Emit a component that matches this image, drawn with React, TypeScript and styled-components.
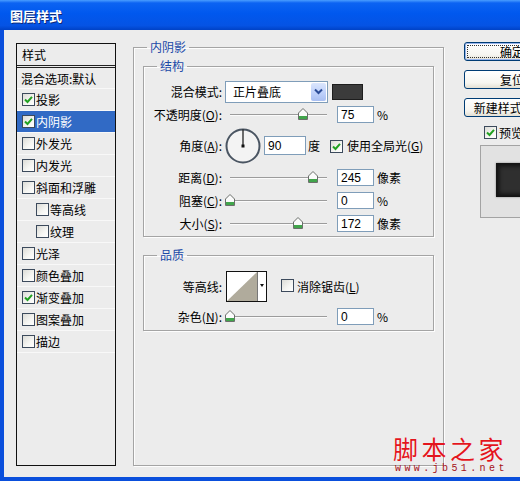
import React from 'react'
import styled, { createGlobalStyle } from 'styled-components'

const GlobalStyle = createGlobalStyle`
  html, body { margin: 0; padding: 0; overflow: hidden; }
  body {
    font-family: "Noto Sans CJK SC", "Liberation Sans", sans-serif;
    font-size: 12px;
    color: #000;
  }
`

const Window = styled.div`
  position: relative;
  width: 520px;
  height: 481px;
  display: flex;
  flex-direction: column;
  background: #0a4fdc;
  overflow: hidden;
`

const TitleBar = styled.div`
  flex: none;
  height: 30px;
  display: flex;
  align-items: center;
  padding-left: 10px;
  background: linear-gradient(180deg, #4a9dff 0%, #0c63f2 10%, #0058ee 45%, #0553e4 85%, #0042c6 100%);
  color: #fff;
  font-weight: bold;
  font-size: 13px;
  text-shadow: 1px 1px 0 #0b2a7a;
`

const Client = styled.div`
  flex: 1;
  min-height: 0;
  margin: 0 0 4px 4px;
  padding: 10px 0 11px 12px;
  box-sizing: border-box;
  background: #ececec;
  display: flex;
  align-items: stretch;
  overflow: hidden;
`

/* ---------- left style list ---------- */

const StyleList = styled.div`
  flex: none;
  width: 100px;
  margin-top: 3px;
  box-sizing: border-box;
  border: 1px solid #111;
  display: flex;
  flex-direction: column;
`

const ListHeader = styled.div`
  height: 21px;
  padding-left: 5px;
  display: flex;
  align-items: center;
  border-bottom: 3px double #222;
`

const ListItem = styled.div<{ $indent?: boolean; $selected?: boolean; $plain?: boolean }>`
  height: ${p => (p.$plain ? 21 : 22)}px;
  box-sizing: border-box;
  display: flex;
  align-items: center;
  gap: 1px;
  padding-left: ${p => (p.$indent ? 19 : p.$plain ? 4 : 5)}px;
  border-bottom: 1px solid #f8f8f8;
  background: ${p => (p.$selected ? '#316ac5' : 'transparent')};
  color: ${p => (p.$selected ? '#fff' : '#000')};
  white-space: nowrap;
`

const Box = styled.span`
  flex: none;
  width: 13px;
  height: 13px;
  box-sizing: border-box;
  border: 1px solid #3c4a5c;
  background: linear-gradient(135deg, #dcdcd7 0%, #f6f6f3 60%, #fff 100%);
  display: inline-flex;
  align-items: center;
  justify-content: center;
`

const Check = ({ on }: { on?: boolean }) => (
  <Box>
    {on && (
      <svg width="9" height="9" viewBox="0 0 9 9">
        <path d="M1 4.5 L3.5 7 L8 1.8" fill="none" stroke="#21a121" strokeWidth="2" />
      </svg>
    )}
  </Box>
)

/* ---------- group boxes ---------- */

const GroupBox = styled.fieldset<{ $outer?: boolean; $top?: number }>`
  margin: ${p => p.$top ?? 0}px 0 0;
  min-width: 0;
  box-sizing: border-box;
  border: 1px solid #a4a4a4;
  box-shadow: 1px 1px 0 #fdfdfd, inset 1px 1px 0 #fdfdfd;
  padding: ${p => (p.$outer ? '5px 9px 0' : '0')};
`

const Legend = styled.legend<{ $shift: number }>`
  margin-left: ${p => p.$shift}px;
  padding: 0 3px;
  line-height: 14px;
  color: #1b4aa8;
`

const MainGroup = styled(GroupBox)`
  flex: none;
  width: 311px;
  margin-left: 17px;
`

const Section = styled.div<{ $pad: string }>`
  padding: ${p => p.$pad};
`

const Row = styled.div<{ $h?: number; $top?: number }>`
  display: flex;
  align-items: center;
  height: ${p => p.$h ?? 23}px;
  margin-top: ${p => p.$top ?? 0}px;
  white-space: nowrap;
`

const Label = styled.span`
  flex: none;
  width: 80px;
  box-sizing: border-box;
  padding-right: 2px;
  text-align: right;
`

const Select = styled.div`
  flex: none;
  width: 103px;
  height: 22px;
  margin-left: 1px;
  box-sizing: border-box;
  border: 1px solid #7f9db9;
  background: #fff;
  display: flex;
  align-items: center;
  justify-content: space-between;
  padding: 0 1px 0 7px;
`

const SelectButton = styled.span`
  width: 15px;
  height: 18px;
  border-radius: 2px;
  background: linear-gradient(180deg, #dbe6fd 0%, #bccffa 60%, #a9bff2 100%);
  display: flex;
  align-items: center;
  justify-content: center;
`

const Swatch = styled.span`
  flex: none;
  width: 31px;
  height: 16px;
  margin-left: 4px;
  box-sizing: border-box;
  border: 1px solid #1d1d1d;
  background: #3b3b3b;
`

const Slider = styled.div`
  position: relative;
  flex: none;
  width: 107px;
  height: 23px;
  margin-left: 2px;
  &::before {
    content: '';
    position: absolute;
    left: 4px;
    right: 6px;
    top: 11px;
    border-top: 1px solid #9c9c9c;
    border-bottom: 1px solid #fbfbfb;
  }
`

const Thumb = styled.svg`
  position: absolute;
  top: 5px;
`

const NumBox = styled.span<{ $w?: number; $h?: number; $left?: number }>`
  flex: none;
  width: ${p => p.$w ?? 37}px;
  height: ${p => p.$h ?? 17}px;
  margin-left: ${p => p.$left ?? 4}px;
  box-sizing: border-box;
  border: 1px solid #7f9db9;
  background: #fff;
  padding-left: 3px;
  font-family: "Liberation Sans", sans-serif;
  font-size: 12px;
  display: flex;
  align-items: center;
`

const Unit = styled.span<{ $left?: number }>`
  margin-left: ${p => p.$left ?? 3}px;
`

const Dial = styled.svg`
  flex: none;
  margin-left: 1px;
`

const Contour = styled.svg`
  flex: none;
  margin-left: 2px;
`

/* ---------- right column ---------- */

const SideColumn = styled.div`
  flex: none;
  width: 100px;
  margin: 2px 0 0 20px;
  display: flex;
  flex-direction: column;
  align-items: flex-start;
`

const Button = styled.div<{ $default?: boolean }>`
  position: relative;
  width: 96px;
  height: 19px;
  margin-bottom: 9px;
  box-sizing: border-box;
  border: 1px solid #003c74;
  border-radius: 3px;
  background: linear-gradient(180deg, #ffffff 0%, #f6f5f0 70%, #e3dfd3 100%);
  box-shadow: ${p => (p.$default ? 'inset 0 0 0 1px #98b4ec' : 'none')};
  display: flex;
  align-items: center;
  justify-content: center;
  white-space: nowrap;
  &::after {
    content: '';
    display: ${p => (p.$default ? 'block' : 'none')};
    position: absolute;
    inset: 2px;
    border: 1px dotted #333;
  }
`

const PreviewToggle = styled.div`
  display: flex;
  align-items: center;
  gap: 2px;
  height: 16px;
  margin-top: -2px;
  padding-left: 20px;
`

const PreviewBox = styled.div`
  width: 90px;
  height: 73px;
  margin: 5px 0 0 16px;
  box-sizing: border-box;
  border: 1px solid #a3a3a3;
  border-right: none;
  background: #e2e2e2;
  padding: 17px 0 0 15px;
`

const PreviewSquare = styled.div`
  width: 70px;
  height: 34px;
  background: #2f2f2f;
  box-shadow: inset 3px 0 4px #151515, inset 0 3px 4px #151515, inset 0 -3px 4px #151515, 0 0 2px #888;
`

/* ---------- watermark ---------- */

const Watermark = styled.div`
  position: absolute;
  left: 393px;
  top: 433px;
  display: flex;
  flex-direction: column;
  align-items: flex-start;
  pointer-events: none;
`

const WmTitle = styled.span`
  font-size: 25px;
  line-height: 30px;
  letter-spacing: 3.5px;
  color: #e3151d;
  text-shadow: 0 0 1px #fff;
`

const WmUrl = styled.span`
  margin-top: 1px;
  font-family: "Liberation Mono", monospace;
  font-size: 10px;
  line-height: 10px;
  letter-spacing: 3.4px;
  color: #a51219;
  padding-left: 2px;
`

/* ---------- pieces ---------- */

const TRACK = 97

const SliderControl = ({ frac }: { frac: number }) => (
  <Slider>
    <Thumb width="10" height="12" viewBox="0 0 10 12" style={{ left: 4 + frac * TRACK - 5 }}>
      <path d="M0.5 5 L5 0.5 L9.5 5 L9.5 11.5 L0.5 11.5 Z" fill="#fbfbfb" stroke="#6b6f6b" />
      <rect x="1" y="8" width="8" height="3" fill="#41a54b" />
    </Thumb>
  </Slider>
)

const styleItems: { name: string; on?: boolean; indent?: boolean; selected?: boolean }[] = [
  { name: '投影', on: true },
  { name: '内阴影', on: true, selected: true },
  { name: '外发光' },
  { name: '内发光' },
  { name: '斜面和浮雕' },
  { name: '等高线', indent: true },
  { name: '纹理', indent: true },
  { name: '光泽' },
  { name: '颜色叠加' },
  { name: '渐变叠加', on: true },
  { name: '图案叠加' },
  { name: '描边' },
]

export default function App() {
  return (
    <Window>
      <GlobalStyle />
      <TitleBar>图层样式</TitleBar>
      <Client>
        <StyleList>
          <ListHeader>样式</ListHeader>
          <ListItem $plain>混合选项:默认</ListItem>
          {styleItems.map(item => (
            <ListItem key={item.name} $indent={item.indent} $selected={item.selected}>
              <Check on={item.on} />
              {item.name}
            </ListItem>
          ))}
        </StyleList>

        <MainGroup $outer>
          <Legend $shift={4}>内阴影</Legend>

          <GroupBox>
            <Legend $shift={13}>结构</Legend>
            <Section $pad="7px 0 1px">
              <Row>
                <Label>混合模式:</Label>
                <Select>
                  正片叠底
                  <SelectButton>
                    <svg width="9" height="7" viewBox="0 0 9 7">
                      <path d="M1 1.5 L4.5 5 L8 1.5" fill="none" stroke="#2b4c98" strokeWidth="2" />
                    </svg>
                  </SelectButton>
                </Select>
                <Swatch />
              </Row>
              <Row>
                <Label>不透明度(<u>O</u>):</Label>
                <SliderControl frac={0.75} />
                <NumBox>75</NumBox>
                <Unit>%</Unit>
              </Row>
              <Row $h={35} $top={2}>
                <Label>角度(<u>A</u>):</Label>
                <Dial width="36" height="36" viewBox="0 0 36 36">
                  <circle cx="18" cy="18" r="16.5" fill="#f3f3f3" stroke="#4a5562" strokeWidth="2" />
                  <line x1="18" y1="18" x2="18" y2="1.5" stroke="#111" strokeWidth="1.2" />
                  <rect x="16.5" y="16.5" width="3" height="3" fill="#111" />
                </Dial>
                <NumBox $w={42} $h={19} $left={3}>90</NumBox>
                <Unit $left={2}>度</Unit>
                <Unit $left={10}><Check on /></Unit>
                <Unit $left={4}>使用全局光(<u>G</u>)</Unit>
              </Row>
              <Row $top={3}>
                <Label>距离(<u>D</u>):</Label>
                <SliderControl frac={0.855} />
                <NumBox>245</NumBox>
                <Unit>像素</Unit>
              </Row>
              <Row>
                <Label>阻塞(<u>C</u>):</Label>
                <SliderControl frac={0} />
                <NumBox>0</NumBox>
                <Unit>%</Unit>
              </Row>
              <Row>
                <Label>大小(<u>S</u>):</Label>
                <SliderControl frac={0.7} />
                <NumBox>172</NumBox>
                <Unit>像素</Unit>
              </Row>
            </Section>
          </GroupBox>

          <GroupBox $top={11}>
            <Legend $shift={13}>品质</Legend>
            <Section $pad="9px 0 2px">
              <Row $h={31}>
                <Label>等高线:</Label>
                <Contour width="41" height="31" viewBox="0 0 41 31">
                  <rect x="0.5" y="0.5" width="40" height="30" fill="#fff" stroke="#111" />
                  <path d="M1 30 L31 1 L31 30 Z" fill="#b0ab9c" />
                  <line x1="31.5" y1="1" x2="31.5" y2="30" stroke="#777" />
                  <path d="M34 13 L38 13 L36 16 Z" fill="#111" />
                </Contour>
                <Unit $left={14}><Check /></Unit>
                <Unit $left={3}>消除锯齿(<u>L</u>)</Unit>
              </Row>
              <Row $top={3}>
                <Label>杂色(<u>N</u>):</Label>
                <SliderControl frac={0} />
                <NumBox>0</NumBox>
                <Unit>%</Unit>
              </Row>
            </Section>
          </GroupBox>
        </MainGroup>

        <SideColumn>
          <Button $default>确定</Button>
          <Button>复位</Button>
          <Button>新建样式(W)...</Button>
          <PreviewToggle>
            <Check on />
            预览(<u>V</u>)
          </PreviewToggle>
          <PreviewBox>
            <PreviewSquare />
          </PreviewBox>
        </SideColumn>
      </Client>

      <Watermark>
        <WmTitle>脚本之家</WmTitle>
        <WmUrl>www.jb51.net</WmUrl>
      </Watermark>
    </Window>
  )
}
